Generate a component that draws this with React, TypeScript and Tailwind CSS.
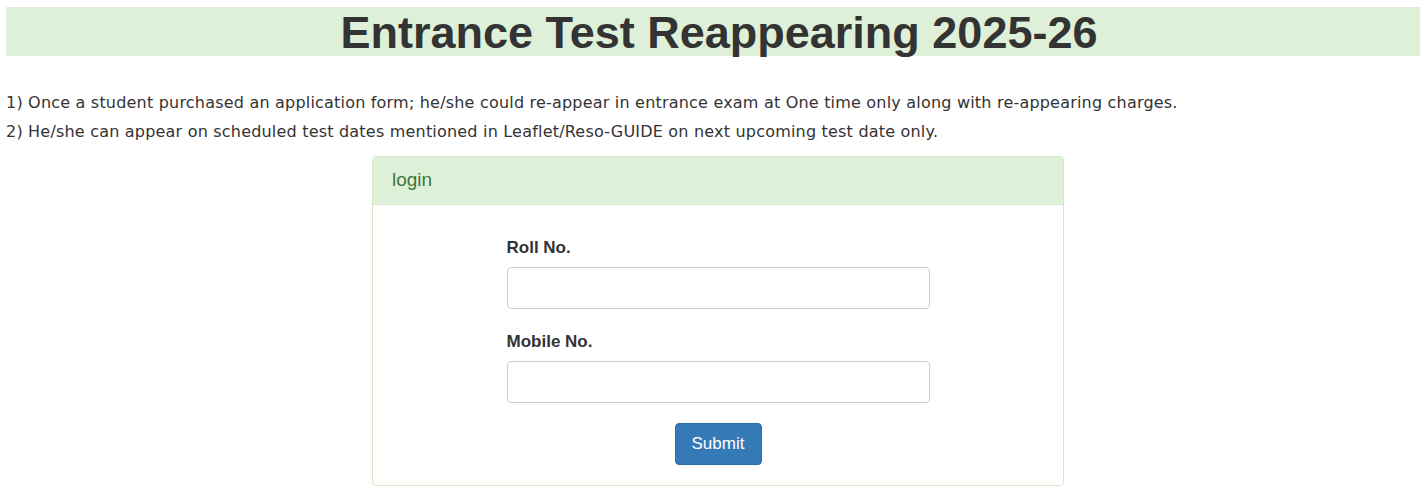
export default function App() {
  return (
    <div className="w-[1420px] h-[492px] bg-white text-[#333] overflow-hidden">
      <div className="pt-[7px] pl-[6px]">
        <div className="h-[49px] bg-[#dff0d8] flex items-center justify-center">
          <h1 className="font-['Liberation_Sans',Arial,sans-serif] font-bold text-[45px] leading-none text-[#333] pl-[12px] pt-[1px]">
            Entrance Test Reappearing 2025-26
          </h1>
        </div>
      </div>
      <div className="mt-[32px] pl-[6px] font-['DejaVu_Sans',sans-serif] text-[16px] tracking-[0.2px] leading-[29px] text-[#333]">
        <div>1) Once a student purchased an application form; he/she could re-appear in entrance exam at One time only along with re-appearing charges.</div>
        <div>2) He/she can appear on scheduled test dates mentioned in Leaflet/Reso-GUIDE on next upcoming test date only.</div>
      </div>
      <div className="mt-[10px] ml-[372px] w-[692px] h-[330px] border border-[#d6e9c6] rounded-[4px] overflow-hidden font-['Liberation_Sans',Arial,sans-serif]">
        <div className="h-[48px] bg-[#dff0d8] border-b border-[#d6e9c6] flex items-center px-[19px]">
          <span className="text-[19px] text-[#3c763d]">login</span>
        </div>
        <div className="pt-[32px] flex justify-center">
          <div className="w-[423px] flex flex-col">
            <label className="text-[17px] leading-[22px] font-bold text-[#333]">Roll No.</label>
            <input className="mt-[8px] h-[42px] w-full border border-[#ccc] rounded-[4px] outline-none px-3" />
            <label className="mt-[22px] text-[17px] leading-[22px] font-bold text-[#333]">Mobile No.</label>
            <input className="mt-[8px] h-[42px] w-full border border-[#ccc] rounded-[4px] outline-none px-3" />
            <div className="mt-[20px] flex justify-center">
              <button className="w-[87px] h-[42px] bg-[#337ab7] border border-[#2e6da4] rounded-[4px] text-white text-[17px]">Submit</button>
            </div>
          </div>
        </div>
      </div>
    </div>
  );
}
